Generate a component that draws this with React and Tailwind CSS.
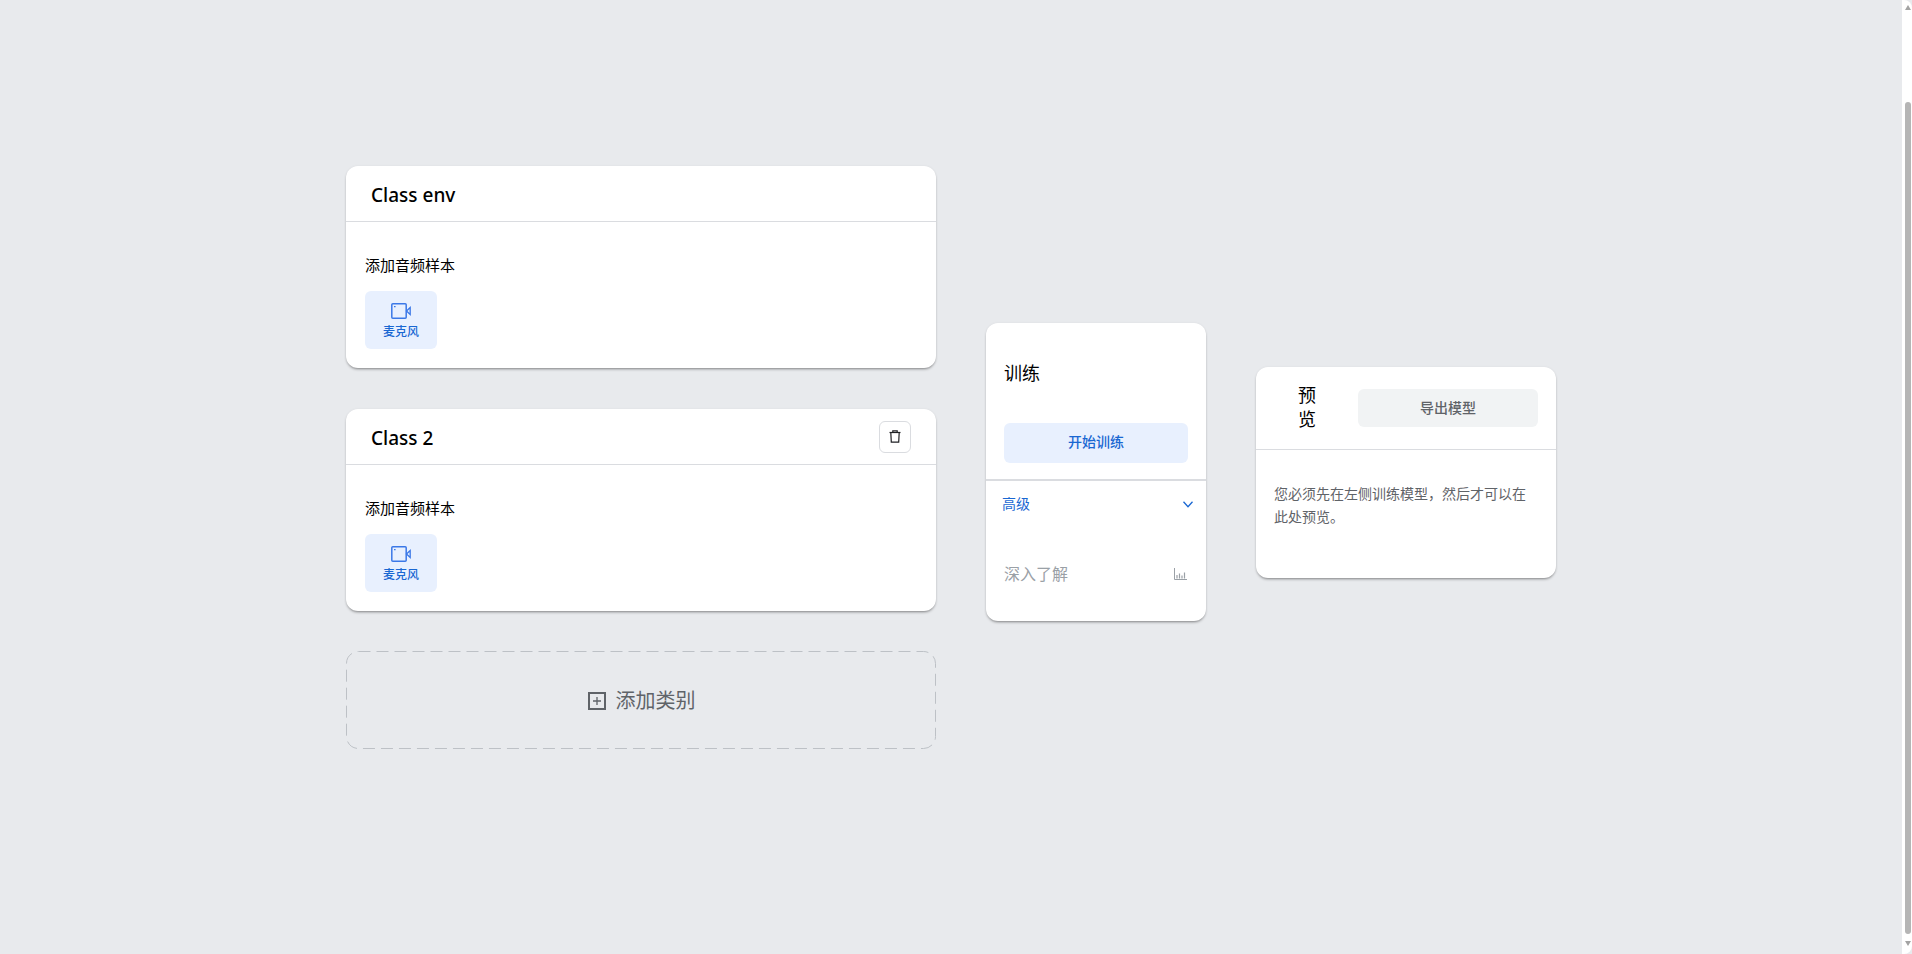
import React from 'react';

const cardShadow = 'shadow-[0_2px_3px_-1px_rgba(0,0,0,0.45),0_0_3px_rgba(0,0,0,0.05)]';

const CameraIcon = () => (
  <svg width="20" height="16" viewBox="0 0 20 16" fill="none" stroke="#3b78e7" strokeWidth="1.5">
    <rect x="0.8" y="0.8" width="14.4" height="14.4" rx="1" />
    <path d="M3 3.6h1.6" strokeWidth="1.3" />
    <path d="M15.5 8 L19.2 4.5 V11.5 Z" strokeWidth="1.3" />
  </svg>
);

const TrashIcon = () => (
  <svg width="12" height="13" viewBox="0 0 12 13" fill="none" stroke="#202124" strokeWidth="1.2">
    <path d="M0.5 2.5h11" />
    <path d="M3.8 2.5V0.8h4.4v1.7" />
    <path d="M1.8 2.5l0.5 9.7h7.4l0.5-9.7" />
  </svg>
);

const PlusBoxIcon = () => (
  <svg width="18" height="18" viewBox="0 0 18 18" fill="none" stroke="#5f6368">
    <rect x="1" y="1" width="16" height="16" strokeWidth="2" />
    <path d="M9 5v8M5 9h8" strokeWidth="1.3" />
  </svg>
);

const ChevronIcon = () => (
  <svg width="10" height="7" viewBox="0 0 10 7" fill="none" stroke="#1967d2" strokeWidth="1.3">
    <path d="M0.5 0.8 L5 5.8 L9.5 0.8" />
  </svg>
);

const BarsIcon = () => (
  <svg width="13" height="12" viewBox="0 0 13 12" fill="none" stroke="#9aa0a6">
    <path d="M0.5 0v11.5H13" />
    <path d="M3 10.5V7M5.5 10.5V5.5M8 10.5V7.5M10.5 10.5V4.5" strokeWidth="1.2" />
  </svg>
);

const DashedOutline = () => (
  <svg className="absolute inset-0 w-full h-full" fill="none">
    <rect x="0.5" y="0.5" width="589" height="97" rx="12" stroke="#bdc1c6" strokeDasharray="12 6" />
  </svg>
);

const ClassCard = ({ name, removable, className }) => (
  <div className={`h-[202px] rounded-xl bg-white ${cardShadow} ${className || ''}`}>
    <div className="h-[56px] flex items-center justify-between pl-[25px] pr-[25px] border-b border-[#dadce0]">
      <span className="pt-[4px] text-[19px] font-medium text-black">{name}</span>
      {removable && (
        <button className="w-[32px] h-[32px] flex items-center justify-center rounded-md border border-[#dadce0] bg-white">
          <TrashIcon />
        </button>
      )}
    </div>
    <div className="pl-[19px] pt-[33px]">
      <div className="text-[15px] leading-[20px] text-black">添加音频样本</div>
      <button className="mt-[16px] w-[72px] h-[58px] rounded-md bg-[#e8f0fe] flex flex-col items-center pt-[12px]">
        <CameraIcon />
        <span className="mt-[5px] text-[12px] leading-[16px] font-medium text-[#1967d2]">麦克风</span>
      </button>
    </div>
  </div>
);

const Scrollbar = () => (
  <div className="w-[10px] h-full bg-white rounded-tr-lg rounded-br-lg flex flex-col items-center pl-[2px]">
    <div className="mt-[5px] w-0 h-0 border-x-[3px] border-x-transparent border-b-[5px] border-b-[#a3a3a3]" />
    <div className="mt-[92px] w-[6px] h-[832px] rounded-[3px] bg-[#b5b5b5]" />
    <div className="mt-[7px] w-0 h-0 border-x-[3px] border-x-transparent border-t-[5px] border-t-[#a3a3a3]" />
  </div>
);

export default function App() {
  return (
    <div className="h-[954px] flex bg-[#e8eaed] font-['Noto_Sans','Noto_Sans_CJK_SC',sans-serif] overflow-hidden">
      <div className="flex-1 flex items-start pl-[346px] pt-[166px]">
        <div className="w-[590px] flex flex-col">
          <ClassCard name="Class env" />
          <ClassCard name="Class 2" removable className="mt-[41px]" />
          <button className="relative mt-[40px] h-[98px] flex items-center justify-center gap-[10px] pt-[2px] pl-[1px]">
            <DashedOutline />
            <PlusBoxIcon />
            <span className="text-[20px] text-[#5f6368]">添加类别</span>
          </button>
        </div>

        <div className={`ml-[50px] mt-[157px] w-[220px] h-[298px] rounded-xl bg-white ${cardShadow} pt-[38px]`}>
          <h2 className="pl-[18px] text-[18px] leading-[24px] text-black">训练</h2>
          <button className="mt-[38px] ml-[18px] w-[184px] h-[40px] pb-[3px] rounded-md bg-[#e8f0fe] text-[14px] font-medium text-[#1967d2]">开始训练</button>
          <div className="mt-[16px] border-t-2 border-[#dadce0]" />
          <div className="mt-[13px] pl-[16px] pr-[13px] flex items-center justify-between text-[14px] leading-[20px] text-[#1967d2]">
            <span>高级</span>
            <ChevronIcon />
          </div>
          <div className="mt-[48px] pl-[18px] pr-[19px] flex items-center justify-between text-[16px] leading-[24px] text-[#9aa0a6]">
            <span>深入了解</span>
            <BarsIcon />
          </div>
        </div>

        <div className={`ml-[50px] mt-[201px] w-[300px] h-[211px] rounded-xl bg-white ${cardShadow}`}>
          <div className="h-[83px] flex items-center border-b border-[#dadce0] pl-[42px]">
            <h2 className="w-[18px] pb-[2px] text-[18px] leading-[24px] text-black">预览</h2>
            <button className="ml-[42px] w-[180px] h-[38px] pb-[2px] rounded-md bg-[#f1f3f4] text-[14px] font-medium text-[#5f6368]">导出模型</button>
          </div>
          <p className="pt-[33px] pl-[18px] w-[280px] text-[14px] leading-[22.5px] text-[#5f6368]">您必须先在左侧训练模型，然后才可以在此处预览。</p>
        </div>
      </div>
      <Scrollbar />
    </div>
  );
}
